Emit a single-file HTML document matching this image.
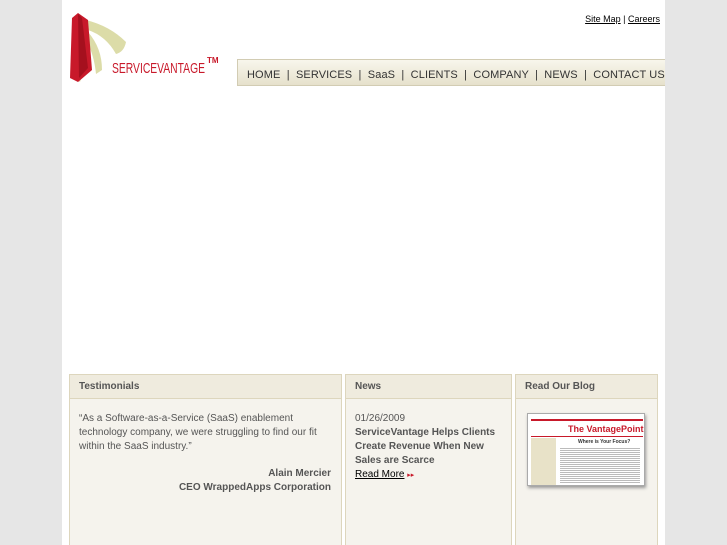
<!DOCTYPE html>
<html><head><meta charset="utf-8">
<style>
*{margin:0;padding:0;box-sizing:border-box}
html,body{width:727px;height:545px;overflow:hidden;background:#e6e6e6;font-family:"Liberation Sans",Arial,sans-serif}
#wrap{position:absolute;left:62px;top:0;width:603px;height:545px;background:#fff}
.top{position:absolute;right:5px;top:14px;font-size:9px;color:#000}
.top a{color:#000;text-decoration:underline}
#nav{position:absolute;left:175px;top:59px;width:428px;height:27px;background:linear-gradient(#f8f6ec,#e6e1cc);border:1px solid #d2ccb3;border-right:none;font-size:11px;color:#333;line-height:30px;white-space:nowrap;padding-left:9px;letter-spacing:0.1px}
.panel{position:absolute;top:374px;height:171px;background:#f5f3ed;border:1px solid #ddd6bd;border-bottom:none}
.ph{height:24px;background:#efebde;border-bottom:1px solid #ddd6bd;font-size:10px;font-weight:bold;color:#555;line-height:23px;padding-left:9px}
.pb{padding:14px 10px;font-size:10px;color:#555;line-height:14px}
</style></head><body>
<div id="wrap">
  <svg style="position:absolute;left:0;top:0" width="170" height="90" viewBox="0 0 170 90">
    <path d="M24 20 Q48 26 64 42 Q62 52 54 54 Q44 36 26 30 Z" fill="#dcdca8"/>
    <path d="M26 32 Q40 48 40 70 L34 74 Q32 54 24 40 Z" fill="#dcdca8"/>
    <path d="M22 40 Q26 62 18 82 L14 80 Q20 62 18 44 Z" fill="#e4e4b8"/>
    <path d="M10 18 L16 13 L26 20 L30 70 L16 82 L8 78 Z" fill="#c8192a"/>
    <path d="M16 14 L20 18 L26 68 L17 78 Z" fill="#a5101e"/>
    <text x="50" y="73" font-family="Liberation Sans Narrow,Liberation Sans,sans-serif" font-size="15" fill="#c8192a" textLength="93" lengthAdjust="spacingAndGlyphs">SERVICEVANTAGE</text>
    <text x="145" y="63" font-size="8" fill="#c8192a" font-family="Liberation Sans,sans-serif" font-weight="bold">TM</text>
  </svg>
  <div class="top"><a>Site Map</a> | <a>Careers</a></div>
  <div id="nav">HOME &nbsp;| &nbsp;SERVICES &nbsp;| &nbsp;SaaS &nbsp;| &nbsp;CLIENTS &nbsp;| &nbsp;COMPANY &nbsp;| &nbsp;NEWS &nbsp;| &nbsp;CONTACT US</div>

  <div class="panel" style="left:7px;width:273px">
    <div class="ph">Testimonials</div>
    <div class="pb" style="padding-top:13px;padding-left:9px">“As a Software-as-a-Service (SaaS) enablement technology company, we were struggling to find our fit within the SaaS industry.”
      <div style="text-align:right;font-weight:bold;margin-top:13px">Alain Mercier<br>CEO WrappedApps Corporation</div>
    </div>
  </div>
  <div class="panel" style="left:283px;width:167px">
    <div class="ph">News</div>
    <div class="pb" style="padding-top:13px;padding-left:9px">01/26/2009<br><b>ServiceVantage Helps Clients Create Revenue When New Sales are Scarce</b><br><span style="color:#000;text-decoration:underline">Read More</span> <span style="color:#c8192a;font-size:7px">▸▸</span></div>
  </div>
  <div class="panel" style="left:453px;width:143px">
    <div class="ph">Read Our Blog</div>
    <div style="position:absolute;left:11px;top:38px;width:118px;height:73px;background:#fff;border:1px solid #aaa;box-shadow:1px 2px 3px #999">
      <div style="position:absolute;left:3px;top:5px;width:112px;height:2px;background:#c8192a"></div>
      <div style="position:absolute;left:40px;top:10px;font-size:9px;font-weight:bold;color:#c8192a;white-space:nowrap">The VantagePoint</div>
      <div style="position:absolute;left:3px;top:22px;width:112px;height:1px;background:#c8192a"></div>
      <div style="position:absolute;left:3px;top:24px;width:25px;height:47px;background:#e8e2c8"></div>
      <div style="position:absolute;left:50px;top:25px;font-size:5px;font-weight:bold;color:#333">Where is Your Focus?</div>
      <div style="position:absolute;left:32px;top:33px;width:80px;height:36px;background:repeating-linear-gradient(#fff 0 1px,#bbb 1px 2px)"></div>
    </div>
  </div>
</div>
</body></html>
